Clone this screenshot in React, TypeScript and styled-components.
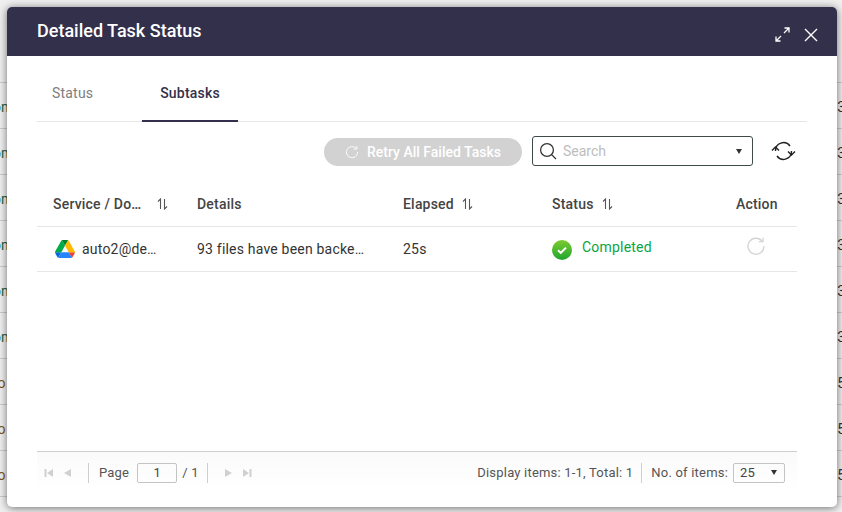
import React from "react";
import styled, { createGlobalStyle } from "styled-components";

const Global = createGlobalStyle`
  html, body { margin: 0; padding: 0; height: 100%; overflow: hidden; background: #fff; }
  #root { height: 512px; }
  * { box-sizing: border-box; }
  body { font-family: Roboto, "Liberation Sans", sans-serif; }
`;

const Page = styled.div`
  position: relative;
  width: 842px;
  height: 512px;
  overflow: hidden;
  background: #fff;
`;
const BackTable = styled.div`
  display: flex;
  flex-direction: column;
  padding-top: 37px;
  color: #333;
  font-size: 14px;
`;
const BackRow = styled.div`
  height: 46px;
  flex: none;
  border-bottom: 1px solid #d9d9d9;
  display: flex;
  justify-content: space-between;
  align-items: center;
  padding-top: 3px;
`;
const BackLeft = styled.span<{ $warm?: boolean }>`
  margin-left: -7px;
  color: ${(p) => (p.$warm ? "#8a5a1c" : "#1f6b4a")};
`;
const BackRight = styled.span`
  margin-right: -3px;
`;
const Scrim = styled.div`
  position: absolute;
  inset: 0;
  background: rgba(0, 0, 0, 0.06);
`;
const Modal = styled.div`
  position: absolute;
  left: 7px;
  top: 7px;
  width: 830px;
  height: 500px;
  background: #fff;
  border-radius: 5px;
  box-shadow: 0 1px 8px rgba(0, 0, 0, 0.55);
  display: flex;
  flex-direction: column;
  overflow: hidden;
`;
const Header = styled.header`
  height: 49px;
  flex: none;
  background: #33304c;
  display: flex;
  align-items: center;
  padding: 0 19px 0 30px;
  color: #fff;
`;
const Title = styled.h1`
  margin: 0 auto 0 0;
  font-size: 18px;
  font-weight: 500;
  line-height: 49px;
  position: relative;
  top: -1px;
`;
const HeaderIcons = styled.div`
  display: flex;
  align-items: center;
  gap: 14px;
  margin-top: 6px;
`;
const Body = styled.div`
  flex: 1;
  display: flex;
  flex-direction: column;
  padding: 0 30px;
  min-height: 0;
`;
const Tabs = styled.nav`
  height: 66px;
  flex: none;
  display: flex;
  align-items: flex-end;
  border-bottom: 1px solid #e6e6e6;
  padding-left: 0;
`;
const Tab = styled.div<{ $active?: boolean }>`
  width: ${(p) => (p.$active ? "96px" : "105px")};
  height: 39px;
  margin-bottom: -1px;
  text-align: ${(p) => (p.$active ? "center" : "left")};
  padding-left: ${(p) => (p.$active ? "0" : "15px")};
  font-size: 14px;
  line-height: 20px;
  font-weight: ${(p) => (p.$active ? 500 : 400)};
  letter-spacing: 0.2px;
  color: ${(p) => (p.$active ? "#33304c" : "#7d7d7d")};
  border-bottom: 2px solid ${(p) => (p.$active ? "#33304c" : "transparent")};
`;
const Toolbar = styled.div`
  display: flex;
  align-items: center;
  justify-content: flex-end;
  height: 30px;
  margin-top: 14px;
  padding-right: 10px;
`;
const RetryButton = styled.div`
  width: 198px;
  height: 28px;
  margin-top: 2px;
  border-radius: 14px;
  background: #d2d2d2;
  color: #fff;
  font-size: 14px;
  font-weight: 500;
  display: flex;
  align-items: center;
  justify-content: center;
  gap: 8px;
`;
const SearchBox = styled.div`
  width: 221px;
  height: 30px;
  margin-left: 10px;
  border: 1px solid #3f4a4a;
  border-radius: 3px;
  display: flex;
  align-items: center;
  padding: 0 10px 0 6px;
  color: #bdbdbd;
  font-size: 14px;
  gap: 6px;
`;
const SearchText = styled.span`
  flex: 1;
`;
const Caret = styled.span<{ $small?: boolean }>`
  width: 0;
  height: 0;
  border-left: 3px solid transparent;
  border-right: 3px solid transparent;
  border-top: 5px solid #333;
`;
const SyncWrap = styled.div`
  display: flex;
  margin-left: 18px;
  margin-right: 1px;
`;
const TableWrap = styled.div`
  width: 760px;
  flex: 1;
  display: flex;
  flex-direction: column;
  margin-top: 15px;
`;
const Row = styled.div<{ $h: number }>`
  display: grid;
  grid-template-columns: 144px 206px 149px 184px 77px;
  height: ${(p) => p.$h}px;
  flex: none;
  align-items: center;
  border-bottom: 1px solid #e6e6e6;
`;
const HeadCell = styled.div`
  padding-left: 16px;
  font-size: 14px;
  font-weight: 500;
  color: #444;
  letter-spacing: 0.2px;
  display: flex;
  align-items: center;
  white-space: nowrap;
`;
const Cell = styled.div`
  padding-left: 16px;
  font-size: 14px;
  color: #333;
  letter-spacing: 0.2px;
  display: flex;
  align-items: center;
  white-space: nowrap;
`;
const ServiceCell = styled(Cell)`
  padding-left: 18px;
  gap: 7px;
`;
const StatusText = styled.span`
  color: #0aa544;
  margin-left: 10px;
  position: relative;
  top: -2px;
`;
const ActionCell = styled(Cell)`
  padding-left: 26px;
  position: relative;
  top: -3px;
`;
const Spacer = styled.div`
  flex: 1;
`;
const Footer = styled.footer`
  height: 39px;
  flex: none;
  margin-bottom: 17px;
  border-top: 1px solid #cfcfcf;
  background: linear-gradient(#fafafa, #fff);
  display: flex;
  align-items: center;
  padding: 3px 12px 0 7px;
  font-size: 13px;
  color: #555;
  letter-spacing: 0.2px;
`;
const PagerIcons = styled.div`
  display: flex;
  align-items: center;
  gap: 9px;
`;
const Divider = styled.span`
  width: 1px;
  height: 20px;
  background: #cfcfcf;
`;
const PageInput = styled.div`
  width: 40px;
  height: 20px;
  margin: 0 5px 0 8px;
  border: 1px solid #c4c4c4;
  border-radius: 2px;
  text-align: center;
  line-height: 18px;
  color: #444;
`;
const ItemsSelect = styled.div`
  width: 52px;
  height: 20px;
  margin-left: 5px;
  border: 1px solid #c4c4c4;
  border-radius: 2px;
  display: flex;
  align-items: center;
  justify-content: space-between;
  padding: 0 7px 0 6px;
  color: #444;
`;

const SortIcon = ({ ml }: { ml: number }) => (
  <svg width="11" height="12" viewBox="0 0 11 12" style={{ marginLeft: ml }} fill="none" stroke="#555" strokeWidth="1.1">
    <path d="M3.5 11V1L1 3.5" />
    <path d="M7.5 1v10L10 8.5" />
  </svg>
);
const Retry = ({ size, color }: { size: number; color: string }) => (
  <svg width={size} height={size} viewBox="0 0 20 20" fill="none" stroke={color} strokeWidth="1.3">
    <path d="M16.2 5.2A8 8 0 1 0 18 10" />
    <path d="M17 1.5v4.2h-4.2" />
  </svg>
);
const DriveLogo = () => (
  <svg width="20" height="18" viewBox="0 0 87.3 78">
    <path d="m6.6 66.85 3.85 6.65c.8 1.4 1.95 2.5 3.3 3.3l13.75-23.8h-27.5c0 1.55.4 3.1 1.2 4.5z" fill="#0066da" />
    <path d="m43.65 25-13.75-23.8c-1.35.8-2.5 1.9-3.3 3.3l-25.4 44a9.06 9.06 0 0 0 -1.2 4.5h27.5z" fill="#00ac47" />
    <path d="m73.55 76.8c1.35-.8 2.5-1.9 3.3-3.3l1.6-2.75 7.65-13.25c.8-1.4 1.2-2.95 1.2-4.5h-27.502l5.852 11.5z" fill="#ea4335" />
    <path d="m43.65 25 13.75-23.8c-1.35-.8-2.9-1.2-4.5-1.2h-18.5c-1.6 0-3.15.45-4.5 1.2z" fill="#00832d" />
    <path d="m59.8 53h-32.3l-13.75 23.8c1.35.8 2.9 1.2 4.5 1.2h50.8c1.6 0 3.15-.45 4.5-1.2z" fill="#2684fc" />
    <path d="m73.4 26.5-12.7-22c-.8-1.4-1.95-2.5-3.3-3.3l-13.75 23.8 16.15 28h27.45c0-1.55-.4-3.1-1.2-4.5z" fill="#ffba00" />
  </svg>
);
const Check = () => (
  <svg width="20" height="20" viewBox="0 0 20 20" style={{ position: "relative", top: 1 }}>
    <defs>
      <linearGradient id="g" x1="0" y1="0" x2="0" y2="1">
        <stop offset="0" stopColor="#7ccb2f" />
        <stop offset="1" stopColor="#1fa52f" />
      </linearGradient>
    </defs>
    <circle cx="10" cy="10" r="10" fill="url(#g)" />
    <path d="M6 10.2l2.8 2.6L14 7.6" fill="none" stroke="#fff" strokeWidth="2" />
  </svg>
);
const Pager = ({ dir, edge }: { dir: "l" | "r"; edge?: boolean }) => (
  <svg width="10" height="10" viewBox="0 0 10 10" fill="#d0d0d0" style={{ transform: dir === "r" ? "scaleX(-1)" : undefined }}>
    {edge && <rect x="0.5" y="1" width="2" height="8" />}
    <path d={edge ? "M9 1v8L3 5z" : "M8 1v8L1 5z"} />
  </svg>
);

export default function App() {
  const rows = ["m", "m", "m", "m", "m", "m", "r", "r", "r"];
  const digits = ["3", "3", "3", "3", "3", "3", "5", "5", "5"];
  return (
    <Page>
      <Global />
      <BackTable>
        <BackRow />
        {rows.map((r, i) => (
          <BackRow key={i}>
            <BackLeft $warm={r === "r"}>{r === "r" ? "ro" : "om"}</BackLeft>
            <BackRight>{digits[i]}</BackRight>
          </BackRow>
        ))}
      </BackTable>
      <Scrim />
      <Modal>
        <Header>
          <Title>Detailed Task Status</Title>
          <HeaderIcons>
            <svg width="15" height="15" viewBox="0 0 15 15" fill="none" stroke="#fff" strokeWidth="1.3">
              <path d="M9 6l5-5M9.5 1H14v4.5M6 9l-5 5M1 9.5V14h4.5" />
            </svg>
            <svg width="14" height="14" viewBox="0 0 14 14" fill="none" stroke="#fff" strokeWidth="1.4">
              <path d="M1 1l12 12M13 1L1 13" />
            </svg>
          </HeaderIcons>
        </Header>
        <Body>
          <Tabs>
            <Tab>Status</Tab>
            <Tab $active>Subtasks</Tab>
          </Tabs>
          <Toolbar>
            <RetryButton>
              <Retry size={14} color="#fff" />
              Retry All Failed Tasks
            </RetryButton>
            <SearchBox>
              <svg width="18" height="18" viewBox="0 0 18 18" fill="none" stroke="#333" strokeWidth="1.3">
                <circle cx="8" cy="8" r="6.4" />
                <path d="M12.6 12.6L17 17" />
              </svg>
              <SearchText>Search</SearchText>
              <Caret />
            </SearchBox>
            <SyncWrap>
              <svg width="25" height="22" viewBox="0 0 25 22" fill="none" stroke="#222" strokeWidth="1.4">
                <path d="M4.5 11a8 8 0 0 1 14.5-5" />
                <path d="M20.5 11a8 8 0 0 1-14.5 5" />
                <path d="M1 10.5l3.5-3.5 3.5 3.5M17 11.5l3.5 3.5 3.5-3.5" />
              </svg>
            </SyncWrap>
          </Toolbar>
          <TableWrap>
            <Row $h={46}>
              <HeadCell>Service / Do…<SortIcon ml={16} /></HeadCell>
              <HeadCell>Details</HeadCell>
              <HeadCell>Elapsed<SortIcon ml={8} /></HeadCell>
              <HeadCell>Status<SortIcon ml={8} /></HeadCell>
              <HeadCell>Action</HeadCell>
            </Row>
            <Row $h={45}>
              <ServiceCell><DriveLogo />auto2@de…</ServiceCell>
              <Cell>93 files have been backe…</Cell>
              <Cell>25s</Cell>
              <Cell><Check /><StatusText>Completed</StatusText></Cell>
              <ActionCell><Retry size={20} color="#d4d4d4" /></ActionCell>
            </Row>
            <Spacer />
            <Footer>
              <PagerIcons>
                <Pager dir="l" edge />
                <Pager dir="l" />
              </PagerIcons>
              <Divider style={{ marginLeft: 15, marginRight: 10 }} />
              Page
              <PageInput>1</PageInput>
              / 1
              <Divider style={{ marginLeft: 8, marginRight: 15 }} />
              <PagerIcons>
                <Pager dir="r" />
                <Pager dir="r" edge />
              </PagerIcons>
              <Spacer />
              Display items: 1-1, Total: 1
              <Divider style={{ marginLeft: 8, marginRight: 9 }} />
              No. of items:
              <ItemsSelect>25<Caret /></ItemsSelect>
            </Footer>
          </TableWrap>
        </Body>
      </Modal>
    </Page>
  );
}
